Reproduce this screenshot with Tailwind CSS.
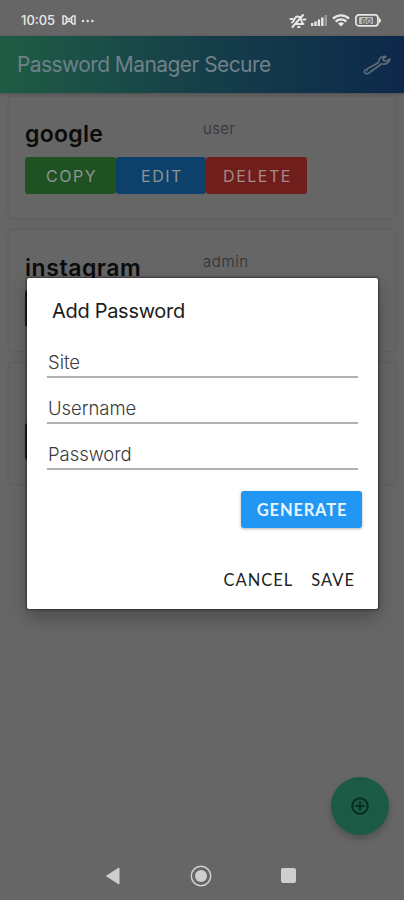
<!DOCTYPE html>
<html lang="en">
<head>
<meta charset="utf-8">
<title>Password Manager Secure</title>
<script src="https://cdn.jsdelivr.net/npm/@tailwindcss/browser@4"></script>
</head>
<body class="bg-[#666]">
<div class="relative flex h-[900px] w-[404px] flex-col overflow-hidden bg-[#666] font-['Inter',sans-serif]">
  <div class="flex h-9 shrink-0 items-center pt-[5px] pl-[21px] text-[#e8e8e8]">
    <span class="w-[41px] text-[13px] font-medium whitespace-nowrap">10:05</span>
    <svg class="h-[11px] w-[14px]" viewBox="0 0 14 11" fill="none" stroke="currentColor" stroke-width="1.5"><path d="M1 1h2l8 8h2V1h-2L3 9H1z"/><path d="M4.3 3.5v4M9.700 3.500v4"/></svg>
    <svg class="ml-[5px] h-1 w-[14px]" viewBox="0 0 14 4" fill="currentColor"><circle cx="2" cy="2" r="1.200"/><circle cx="6.700" cy="2" r="1.200"/><circle cx="11.400" cy="2" r="1.200"/></svg>
    <svg class="ml-auto h-4 w-[18px]" viewBox="0 0 18 16" fill="none" stroke="currentColor" stroke-width="2" stroke-linecap="round" stroke-linejoin="round"><path d="M3 9.500c2-.5 2-4 3.800-5.300C9 2.700 12 4 12.200 6.500c.1 2.500.8 3.300 2.300 4.500H7M9 14h1.500M3.500 14 14 2M1.500 6h2M14.500 6.500h2"/></svg>
    <svg class="ml-1 h-[11px] w-[17px]" viewBox="0 0 17 11" fill="currentColor"><path d="M0 8h2.300v3H0zM3.300 6.500h2.400V11H3.300zM6.700 4.500h2.400V11H6.700zM10.100 2.500h2.400V11h-2.400z"/><path d="M13.500 0H16v11h-2.500z" opacity=".4"/></svg>
    <svg class="ml-1 h-[13px] w-[18px]" viewBox="0 0 18 13" fill="none" stroke="currentColor" stroke-width="2.300"><path d="M1 4.600a11.500 11.500 0 0 1 16 0M3.700 7.600a7.600 7.600 0 0 1 10.600 0"/><path d="M6 9.500q3-2.300 6 0l-3 3z" fill="currentColor" stroke="none"/></svg>
    <svg class="mr-[22px] ml-[5px] h-[13px] w-[27px]" viewBox="0 0 27 13"><rect x=".9" y=".9" width="22" height="11" rx="3" fill="none" stroke="currentColor" stroke-width="1.700"/><path d="M24 3.500q4 3 0 6z" fill="currentColor"/><rect x="4" y="3" width="14" height="7" rx="1" fill="#bbb"/><text x="11.500" y="9.500" font-size="8" font-weight="700" text-anchor="middle" fill="#666">60</text></svg>
  </div>

  <header class="flex h-[57px] shrink-0 items-center bg-linear-to-r from-[#1f5c43] via-[#163f49] to-[#0d284b] pr-[13px] pl-[17px] shadow-[0_1px_3px_rgba(0,0,0,.25)]">
    <h1 class="pt-px text-[21px] font-normal tracking-[-0.58px] whitespace-nowrap text-[#71818a]">Password Manager Secure</h1>
    <svg class="ml-auto h-[22px] w-7" viewBox="0 0 28 22" fill="none" stroke="#5f6a78" stroke-width="1.700" stroke-linejoin="round"><path d="M15.500 8.500C15.500 4.500 18.500 1.500 23 2.500l-3 2.300.9 2 2.300.3L27 5c-.5 4-4.500 6-8.300 4.800L5.500 19.300C3 20.800.2 18.500 2 16.200z"/><path d="M4.200 17.200h.6"/></svg>
  </header>

  <main class="flex flex-col gap-3 px-[9px] pt-[4px]">
    <section class="h-[121px] rounded-xs px-4 pt-[23px] shadow-[0_0_3px_rgba(0,0,0,.17)]">
      <div class="flex h-[37px]">
        <h2 class="w-[178px] text-[23px] leading-[29px] font-semibold tracking-[0.3px] text-[#0b0b0b]">google</h2>
        <span class="text-[15px] leading-[17px] font-light tracking-[0.4px] text-[#303030]">user</span>
      </div>
      <div class="flex h-[37px] text-[16px] tracking-[1.500px] text-[#8c9692]">
        <button class="w-[91px] rounded-[3px] bg-[#1f5123] pl-[2px]">COPY</button>
        <button class="w-[90px] rounded-[3px] bg-[#0d416b] pl-[2px]">EDIT</button>
        <button class="w-[101px] rounded-[3px] bg-[#701e1c] pl-[2px] text-[#a58a88]">DELETE</button>
      </div>
    </section>
    <section class="h-[121px] rounded-xs px-4 pt-[23px] shadow-[0_0_3px_rgba(0,0,0,.17)]">
      <div class="flex h-[37px]">
        <h2 class="w-[178px] text-[23px] leading-[30px] font-semibold tracking-[0.550px] text-[#0b0b0b]">instagram</h2>
        <span class="text-[15px] leading-[17px] font-light tracking-[0.600px] text-[#303030]">admin</span>
      </div>
      <div class="flex h-[37px]"><div class="w-[91px] rounded-[3px] bg-[#0d270e]"></div></div>
    </section>
    <section class="h-[121px] rounded-xs px-4 pt-[23px] shadow-[0_0_3px_rgba(0,0,0,.17)]">
      <div class="h-[37px]"></div>
      <div class="flex h-[37px]"><div class="w-[91px] rounded-[3px] bg-[#0d270e]"></div></div>
    </section>
  </main>

  <button class="absolute top-[777px] left-[331px] flex size-[58px] items-center justify-center rounded-full bg-[#1b5a45] shadow-[0_4px_7px_rgba(0,0,0,.22)]">
    <svg class="size-5" viewBox="0 0 20 20" fill="none" stroke="#082e22" stroke-width="2"><circle cx="10" cy="10" r="7.700"/><path d="M10 5.500v9M5.500 10h9" stroke-width="2.200"/></svg>
  </button>

  <div role="dialog" class="absolute top-[278px] left-[27px] flex h-[331px] w-[351px] flex-col rounded-[2px] bg-white shadow-[0_0_2px_1px_rgba(0,0,0,.45),0_8px_18px_rgba(0,0,0,.28)]">
    <h3 class="mt-[19px] ml-[25px] text-[20px] leading-[28px] font-normal tracking-[-0.300px] text-[#1c1c1c]">Add Password</h3>
    <div class="mr-5 ml-[20px] flex flex-col text-[18.500px] leading-6 font-light tracking-[-0.050px] text-[#3c3c3c]">
      <div class="flex h-[53px] items-end border-b-2 border-[#b0b0b0] pb-[2px] pl-px">Site</div>
      <div class="flex h-[46px] items-end border-b-2 border-[#b0b0b0] pb-[2px] pl-px">Username</div>
      <div class="flex h-[46px] items-end border-b-2 border-[#b0b0b0] pb-[2px] pl-px">Password</div>
    </div>
    <button class="mt-[21px] mr-4 h-[37px] w-[121px] self-end rounded-[3px] bg-[#2196f3] pt-px pl-[1px] font-['Lato',sans-serif] text-[16.500px] font-bold tracking-[0.800px] text-[#e6f4ff] shadow-[0_1px_3px_rgba(0,0,0,.3)]">GENERATE</button>
    <div class="mt-[41px] mr-[23px] flex justify-end gap-[18px] font-['Lato',sans-serif] text-[16.500px] leading-[22px] tracking-[1px] text-[#222]">
      <span>CANCEL</span><span>SAVE</span>
    </div>
  </div>

  <nav class="mt-auto flex h-[49px] shrink-0 items-center pl-[105px] text-[#cecece]">
    <svg class="h-[18px] w-[15px]" viewBox="0 0 15 18"><path d="M1.500 9 14 1v16z" fill="currentColor" stroke="currentColor" stroke-linejoin="round"/></svg>
    <svg class="ml-[69px] size-6" viewBox="0 0 24 24"><circle cx="12" cy="12" r="9.700" fill="none" stroke="currentColor" stroke-width="1.500"/><circle cx="12" cy="12" r="6" fill="currentColor"/></svg>
    <div class="ml-[68px] size-[15px] rounded-[2px] bg-[#cecece]"></div>
  </nav>
</div>
</body>
</html>
